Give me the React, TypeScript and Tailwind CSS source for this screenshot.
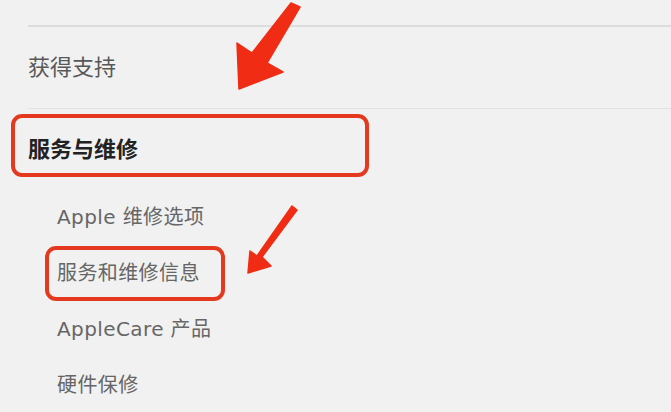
export default function App() {
  const subItems = ["Apple 维修选项", "服务和维修信息", "AppleCare 产品", "硬件保修"];

  return (
    <main
      className="relative w-[671px] h-[412px] overflow-hidden bg-[#f1f1f1]"
      style={{ fontFamily: '"DejaVu Sans", "Noto Sans CJK SC", sans-serif' }}
    >
      <div className="ml-[28px] mt-[25px] border-t-2 border-[#dddddd]">
        {/* Get support */}
        <div className="h-[82px] flex items-center border-b border-[#e2e2e2]">
          <span className="text-[22px] text-[#585858]">获得支持</span>
        </div>

        {/* Service & repair */}
        <div className="h-[80px] flex items-center">
          <span className="text-[22px] font-bold text-[#222222]">服务与维修</span>
        </div>

        <ul className="ml-[29px] flex flex-col">
          {subItems.map((item) => (
            <li
              key={item}
              className="h-[56px] flex items-center text-[20px] tracking-[0.4px] text-[#666666]"
            >
              {item}
            </li>
          ))}
        </ul>
      </div>

      {/* Annotation boxes */}
      <div className="absolute left-[11px] top-[114px] w-[358px] h-[63px] border-4 border-[#e5391f] rounded-[11px]" />
      <div className="absolute left-[45px] top-[246px] w-[180px] h-[55px] border-4 border-[#e5391f] rounded-[11px]" />

      {/* Annotation arrows */}
      <svg className="absolute left-0 top-0" width="671" height="412" viewBox="0 0 671 412">
        <polygon
          points="291,3 300,7 267,63 283,72 239,89 237,43 252,53"
          fill="#f02c14"
          strokeLinejoin="round"
          stroke="#f02c14"
          strokeWidth="1.5"
        />
        <polygon
          points="292,206 297,210 262,257 271,266 248,273 250,251 257,256"
          fill="#f02c14"
          strokeLinejoin="round"
          stroke="#f02c14"
          strokeWidth="1.5"
        />
      </svg>
    </main>
  );
}
